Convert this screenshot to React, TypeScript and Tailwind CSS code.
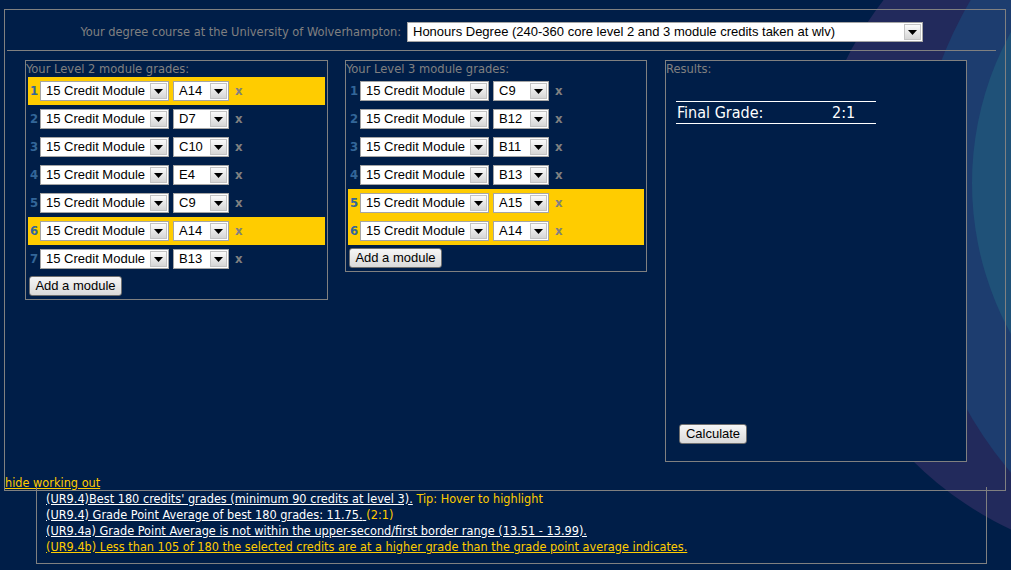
import React from "react";

const level2 = [
  { grade: "A14", hot: true },
  { grade: "D7", hot: false },
  { grade: "C10", hot: false },
  { grade: "E4", hot: false },
  { grade: "C9", hot: false },
  { grade: "A14", hot: true },
  { grade: "B13", hot: false },
];

const level3 = [
  { grade: "C9", hot: false },
  { grade: "B12", hot: false },
  { grade: "B11", hot: false },
  { grade: "B13", hot: false },
  { grade: "A15", hot: true },
  { grade: "A14", hot: true },
];

const arial = { fontFamily: '"Liberation Sans", Arial, sans-serif' };

function Arrow() {
  return (
    <span className="flex h-full w-[17px] items-center justify-center border border-[#c4c4c4] bg-gradient-to-b from-[#fbfbfb] to-[#d6d6d6]">
      <svg width="9" height="5" viewBox="0 0 9 5">
        <path d="M0 0H9L4.5 5Z" fill="#000" />
      </svg>
    </span>
  );
}

function FakeSelect({ value, className }: { value: string; className: string }) {
  return (
    <div className={`flex h-[20px] items-stretch border border-[#a5a5a5] bg-white ${className}`} style={arial}>
      <span className="flex-1 truncate pl-[5px] text-[13px] leading-[18px] text-black">{value}</span>
      <div className="p-px">
        <Arrow />
      </div>
    </div>
  );
}

function Btn({ label, className }: { label: string; className: string }) {
  return (
    <button
      className={`h-[20px] rounded-[3px] border border-[#707070] bg-gradient-to-b from-[#f6f6f6] to-[#dadada] text-[13px] leading-[18px] text-black ${className}`}
      style={arial}
    >
      {label}
    </button>
  );
}

function ModuleRow({ n, grade, hot }: { n: number; grade: string; hot: boolean }) {
  return (
    <div className={`flex h-[28px] items-center ${hot ? "bg-[#ffcc00]" : ""}`}>
      <span className="w-[12px] text-center text-[13px] font-bold text-[#336699]">{n}</span>
      <FakeSelect value="15 Credit Module" className="w-[129px]" />
      <FakeSelect value={grade} className="ml-[4px] w-[56px]" />
      <span className="ml-[6px] text-[13px] font-bold text-[#808080]">x</span>
    </div>
  );
}

function ModulePanel({
  title,
  rows,
  className,
}: {
  title: string;
  rows: { grade: string; hot: boolean }[];
  className: string;
}) {
  return (
    <div className={`flex flex-col border border-[#808080] bg-[#001e48] ${className}`}>
      <div className="h-[16px] text-[12.8px] leading-[16px] text-[#808080]">{title}</div>
      <div className="mx-[2px] flex flex-col">
        {rows.map((r, i) => (
          <ModuleRow key={i} n={i + 1} grade={r.grade} hot={r.hot} />
        ))}
      </div>
      <Btn label="Add a module" className="ml-[3px] mt-[3px] w-[93px]" />
    </div>
  );
}

export default function App() {
  return (
    <div
      className="relative h-[570px] w-[1011px] overflow-hidden bg-[#001e48]"
      style={{ fontFamily: '"DejaVu Sans Condensed", "Liberation Sans", sans-serif' }}
    >
      <svg className="absolute inset-0" width="1011" height="570" viewBox="0 0 1011 570">
        <circle cx="1158" cy="214" r="348" fill="#222a5c" />
        <circle cx="1324" cy="208" r="410" fill="#1d3d6f" />
        <circle cx="1284" cy="183" r="312" fill="#1f5178" />
      </svg>

      <div className="relative ml-[4px] mt-[9px] flex h-[482px] w-[1002px] flex-col border border-[#808080]">
        <div className="mt-[12px] flex items-center justify-end gap-[6px] pr-[82px]">
          <span className="text-[12.7px] text-[#808080]">
            Your degree course at the University of Wolverhampton:
          </span>
          <div className="flex h-[20px] w-[516px] items-stretch border border-[#a5a5a5] bg-white" style={arial}>
            <span className="flex-1 truncate pl-[5px] text-[13px] leading-[18px] text-black">
              Honours Degree (240-360 core level 2 and 3 module credits taken at wlv)
            </span>
            <div className="p-px">
              <Arrow />
            </div>
          </div>
        </div>

        <div className="ml-[2px] mt-[8px] h-px w-[989px] bg-[#808080]" />

        <div className="ml-[20px] mt-[9px] flex items-start">
          <ModulePanel title="Your Level 2 module grades:" rows={level2} className="h-[240px] w-[303px]" />
          <ModulePanel title="Your Level 3 module grades:" rows={level3} className="ml-[17px] h-[212px] w-[302px]" />
          <div className="ml-[18px] flex h-[402px] w-[302px] flex-col border border-[#808080] bg-[#001e48]">
            <div className="h-[16px] text-[12.8px] leading-[16px] text-[#808080]">Results:</div>
            <div className="ml-[10px] mt-[24px] flex h-[23px] w-[200px] items-center border-y border-white text-[16px] text-white">
              <span className="w-[156px] pl-px">Final Grade:</span>
              <span>2:1</span>
            </div>
            <Btn label="Calculate" className="mb-[17px] ml-[13px] mt-auto w-[68px]" />
          </div>
        </div>

        <a className="mt-auto text-[12.6px] leading-[14px] text-[#ffcc00] underline" href="#">
          hide working out
        </a>
      </div>

      <div className="relative -mt-[4px] ml-[36px] h-[77px] w-[951px] border-x border-b border-[#808080] pl-[9px] pt-[4px] text-[12.6px] leading-[16px]">
        <div>
          <a className="text-white underline" href="#">
            (UR9.4)Best 180 credits' grades (minimum 90 credits at level 3).
          </a>
          <span className="text-[#ffcc00]"> Tip: Hover to highlight</span>
        </div>
        <div>
          <a className="text-white underline" href="#">
            (UR9.4) Grade Point Average of best 180 grades: 11.75.{" "}
          </a>
          <span className="text-[#ffcc00]">(2:1)</span>
        </div>
        <div>
          <a className="text-white underline" href="#">
            (UR9.4a) Grade Point Average is not within the upper-second/first border range (13.51 - 13.99).
          </a>
        </div>
        <div>
          <a className="text-[#ffcc00] underline" href="#">
            (UR9.4b) Less than 105 of 180 the selected credits are at a higher grade than the grade point average indicates.
          </a>
        </div>
      </div>
    </div>
  );
}
